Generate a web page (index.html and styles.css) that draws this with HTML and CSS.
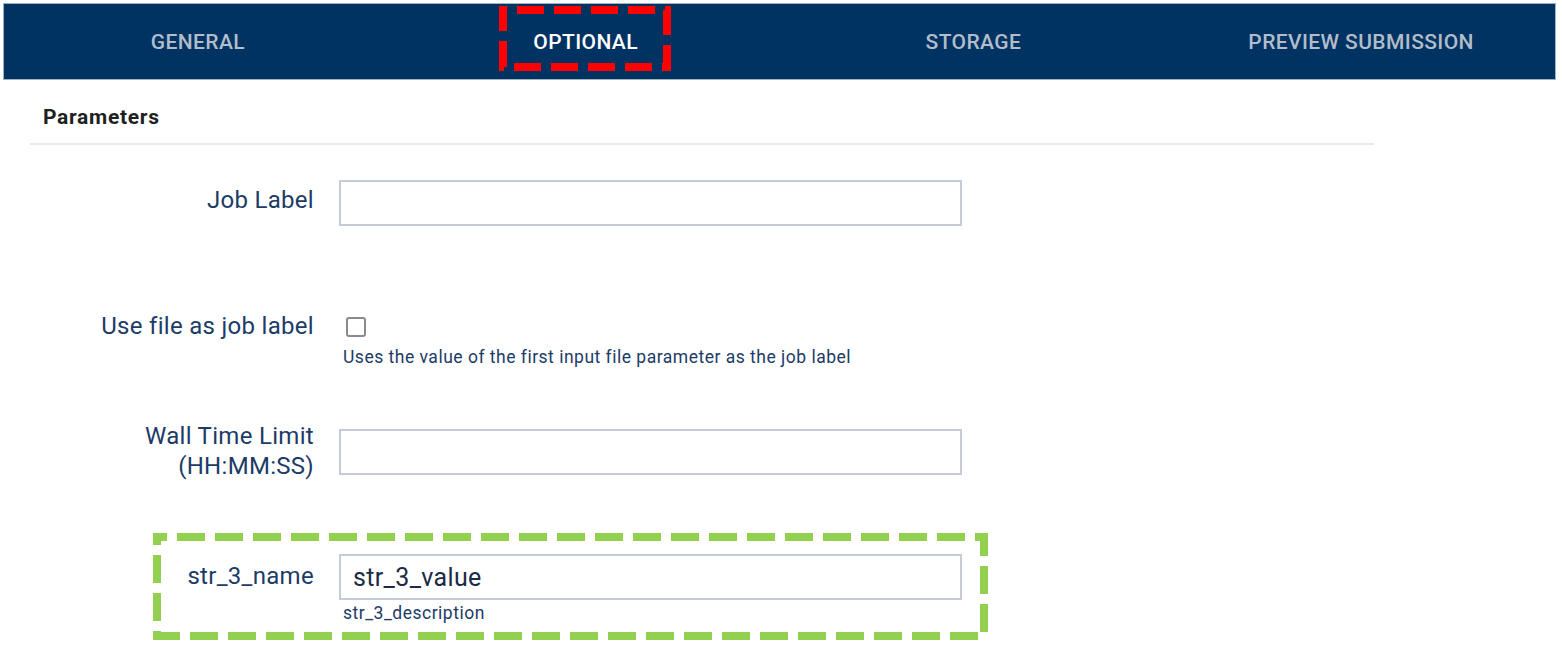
FILE: index.html
```html
<!DOCTYPE html>
<html lang="en">
<head>
<meta charset="utf-8">
<title>Job submission - Optional</title>
<link rel="stylesheet" href="styles.css">
</head>
<body>
<div class="page">
  <nav class="tabs">
    <div class="tab">GENERAL</div>
    <div class="tab tab-active">OPTIONAL
      <svg class="mark mark-red" width="176" height="69" viewBox="0 0 176 69" aria-hidden="true">
        <rect x="4" y="4" width="164" height="57" fill="none" stroke="#ff0000" stroke-width="8" stroke-dasharray="27 10" stroke-dashoffset="-14"/>
      </svg>
    </div>
    <div class="tab">STORAGE</div>
    <div class="tab">PREVIEW SUBMISSION</div>
  </nav>

  <section class="panel">
    <h2 class="panel-title">Parameters</h2>
    <div class="form">
      <div class="row row-job">
        <label class="label">Job Label</label>
        <div class="field"><input class="input" type="text"></div>
      </div>

      <div class="row row-check">
        <label class="label">Use file as job label</label>
        <div class="field">
          <span class="checkbox"></span>
          <div class="help">Uses the value of the first input file parameter as the job label</div>
        </div>
      </div>

      <div class="row row-wall">
        <label class="label">Wall Time Limit<br>(HH:MM:SS)</label>
        <div class="field"><input class="input" type="text"></div>
      </div>

      <div class="highlight">
        <svg class="mark mark-green" width="835" height="107" viewBox="0 0 835 107" aria-hidden="true">
          <rect x="4" y="4" width="827" height="99" fill="none" stroke="#92d050" stroke-width="8" stroke-dasharray="28 10" stroke-dashoffset="-20"/>
        </svg>
        <div class="row row-str">
          <label class="label">str_3_name</label>
          <div class="field">
            <input class="input input-filled" type="text" value="str_3_value">
            <div class="help">str_3_description</div>
          </div>
        </div>
      </div>
    </div>
  </section>
</div>
</body>
</html>
```

FILE: styles.css
```css
* { box-sizing: border-box; }

html, body {
  margin: 0;
  padding: 0;
  background: #ffffff;
}

body {
  font-family: Roboto, "Liberation Sans", Arial, sans-serif;
  color: #1f3c63;
}

.page {
  padding: 4px 7px 0 4px;
}

.tabs {
  display: grid;
  grid-template-columns: repeat(4, 1fr);
  height: 75px;
  background: #003262;
  box-shadow: 0 0 0 1px #9fb0c2;
}

.tab {
  position: relative;
  display: flex;
  align-items: center;
  justify-content: center;
  padding-top: 1px;
  font-size: 21px;
  font-weight: 500;
  letter-spacing: 0.4px;
  color: #b1bdcb;
}

.tab-active {
  color: #ffffff;
}

.mark {
  position: absolute;
  pointer-events: none;
}

.mark-red {
  left: 107px;
  top: 2px;
}

.panel {
  width: 1344px;
  margin-left: 26px;
}

.panel-title {
  margin: 0;
  padding: 26px 0 14px 13px;
  font-size: 21px;
  line-height: 24px;
  font-weight: 700;
  letter-spacing: 0.7px;
  color: #1e1f22;
  border-bottom: 2px solid #e6e9ee;
}

.form {
  display: flex;
  flex-direction: column;
}

.row {
  display: grid;
  grid-template-columns: 284px 623px;
  column-gap: 25px;
  align-items: start;
}

.label {
  text-align: right;
  font-size: 24px;
  line-height: 30px;
  letter-spacing: 0.3px;
  color: #1c3b66;
}

.field {
  display: flex;
  flex-direction: column;
  align-items: flex-start;
}

.input {
  display: block;
  width: 623px;
  height: 46px;
  margin: 0;
  border: 2px solid #c3ccd8;
  border-radius: 0;
  background: #ffffff;
  padding: 0 12px;
  font-family: Roboto, "Liberation Sans", Arial, sans-serif;
  font-size: 25px;
  letter-spacing: 0.35px;
  color: #1b2b45;
  outline: none;
}

.row-job {
  margin-top: 35px;
}

.row-job .label {
  padding-top: 5px;
}

.row-check {
  margin-top: 85px;
}

.checkbox {
  display: block;
  width: 20px;
  height: 20px;
  margin: 6px 0 0 7px;
  border: 2px solid #878a93;
  border-radius: 3px;
  background: #ffffff;
}

.help {
  margin-top: 10px;
  margin-left: 4px;
  font-size: 17.5px;
  line-height: 20px;
  letter-spacing: 0.5px;
  color: #1c3b66;
}

.row-wall {
  margin-top: 54px;
}

.row-wall .input {
  margin-top: 8px;
}

.highlight {
  position: relative;
  width: 835px;
  height: 107px;
  margin: 52px 0 0 123px;
  padding-top: 21px;
}

.mark-green {
  left: 0;
  top: 0;
}

.row-str {
  grid-template-columns: 161px 623px;
}

.row-str .label {
  padding-top: 7px;
}

.row-str .help {
  margin-top: 3px;
}
```
